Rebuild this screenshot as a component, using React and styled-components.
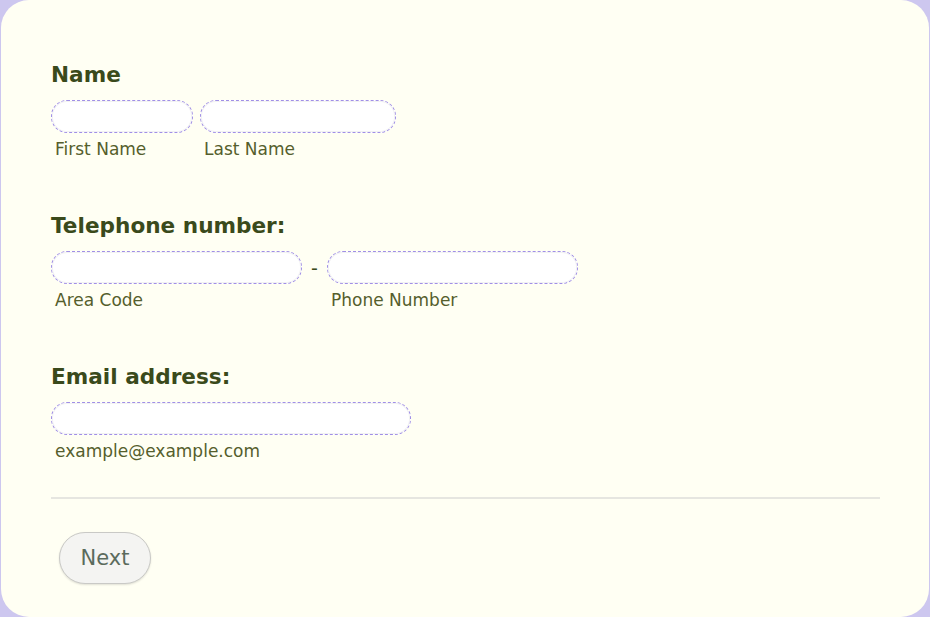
import styled, { createGlobalStyle } from "styled-components";

const GlobalStyle = createGlobalStyle`
    html, body {
        margin: 0;
        padding: 0;
        background: #cdc7ef;
    }
    body {
        font-family: "DejaVu Sans", Verdana, sans-serif;
    }
`

//Styles
const Card = styled.form`
    box-sizing: border-box;
    margin: 0 1px;
    width: 928px;
    height: 617px;
    padding: 62px 49px 0 50px;
    background: #fffff3;
    border-radius: 28px;
`

const Section = styled.div`
    margin-bottom: ${props => props.$last ? 36 : 54}px;
`

const Heading = styled.div`
    font-size: 21.6px;
    line-height: 25px;
    font-weight: bold;
    color: #3a4a1b;
    margin-bottom: 13px;
`

const Row = styled.div`
    display: flex;
    align-items: flex-start;
    gap: ${props => props.$gap || 0}px;
`

const Field = styled.div`
    display: flex;
    flex-direction: column;
    width: ${props => props.$width}px;
`

const Input = styled.input`
    box-sizing: border-box;
    width: 100%;
    height: 33px;
    border: 1px dashed #a08fe6;
    border-radius: 16px;
    background: #ffffff;
    box-shadow: inset 0 0 0 1px #f2f2f2;
    outline: none;
    padding: 0 12px;
    font: inherit;
`

const SubLabel = styled.label`
    font-size: 17px;
    line-height: 20px;
    color: #555e2c;
    padding-left: 4px;
    margin-top: 6px;
    white-space: nowrap;
`

const Dash = styled.span`
    width: 25px;
    height: 33px;
    line-height: 34px;
    text-align: center;
    font-size: 19px;
    color: #3a4a1b;
`

const Divider = styled.hr`
    margin: 0;
    border: none;
    border-top: 2px solid #e6e6e0;
`

const Footer = styled.div`
    padding: 33px 0 0 8px;
`

const NextButton = styled.button`
    box-sizing: border-box;
    width: 92px;
    height: 52px;
    border: 1px solid #c9c9c6;
    border-radius: 26px;
    background: #f4f4f2;
    box-shadow: 0 1px 2px rgba(0, 0, 0, 0.12);
    font-family: "DejaVu Sans", Verdana, sans-serif;
    font-size: 21px;
    color: #5b6b5d;
    cursor: pointer;
`

//Component
function App() {
    return (
        <>
            <GlobalStyle />
            <Card onSubmit={e => e.preventDefault()}>
                <Section>
                    <Heading>Name</Heading>
                    <Row $gap={7}>
                        <Field $width={142}>
                            <Input id="first" />
                            <SubLabel htmlFor="first">First Name</SubLabel>
                        </Field>
                        <Field $width={196}>
                            <Input id="last" />
                            <SubLabel htmlFor="last">Last Name</SubLabel>
                        </Field>
                    </Row>
                </Section>
                <Section>
                    <Heading>Telephone number:</Heading>
                    <Row>
                        <Field $width={251}>
                            <Input id="area" />
                            <SubLabel htmlFor="area">Area Code</SubLabel>
                        </Field>
                        <Dash>-</Dash>
                        <Field $width={251}>
                            <Input id="phone" />
                            <SubLabel htmlFor="phone">Phone Number</SubLabel>
                        </Field>
                    </Row>
                </Section>
                <Section $last>
                    <Heading>Email address:</Heading>
                    <Row>
                        <Field $width={360}>
                            <Input id="email" />
                            <SubLabel htmlFor="email">example@example.com</SubLabel>
                        </Field>
                    </Row>
                </Section>
                <Divider />
                <Footer>
                    <NextButton type="submit">Next</NextButton>
                </Footer>
            </Card>
        </>
    )
}

export default App
